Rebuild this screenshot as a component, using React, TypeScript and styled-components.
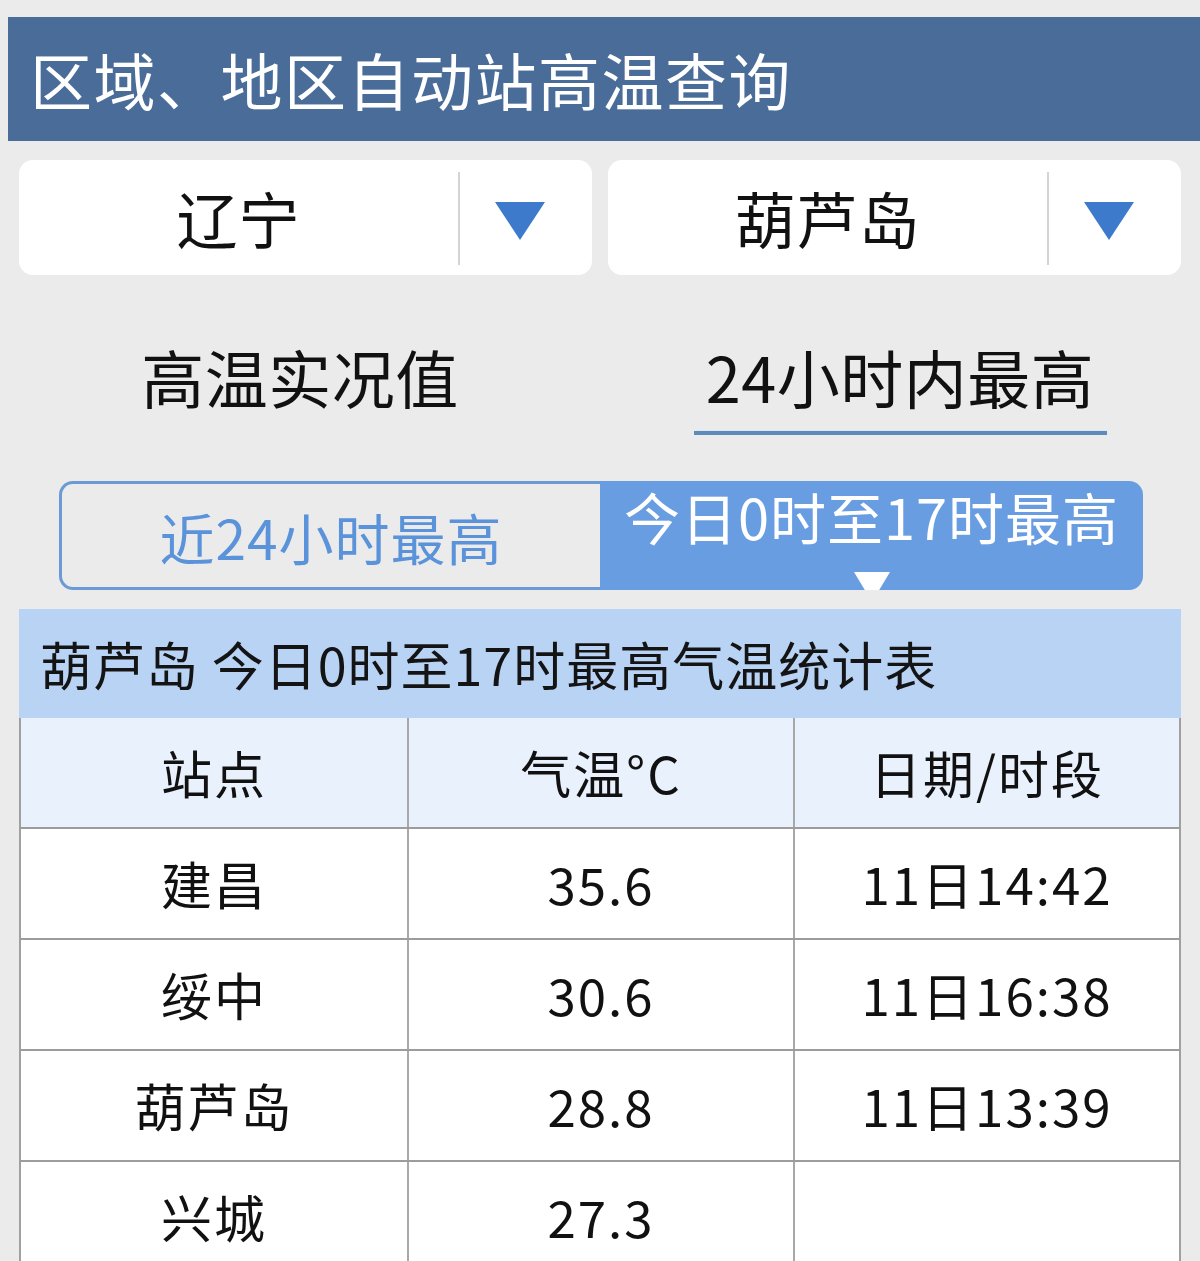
import styled, { createGlobalStyle } from 'styled-components';

const GlobalStyle = createGlobalStyle`
  html, body {
    margin: 0;
    padding: 0;
    background: #ebebeb;
  }
  body {
    font-family: "Noto Sans CJK SC", "Noto Sans", sans-serif;
    color: #111;
  }
`;

const Page = styled.div`
  width: 1200px;
  padding-top: 17px;
  box-sizing: border-box;
`;

const TitleBar = styled.div`
  margin-left: 8px;
  height: 124px;
  background: #4a6c98;
  display: flex;
  align-items: center;
  padding-left: 22px;
  color: #fff;
  font-size: 62px;
  line-height: 1;
  letter-spacing: 1.5px;
`;

const SelectRow = styled.div`
  display: grid;
  grid-template-columns: 1fr 1fr;
  gap: 16px;
  padding: 19px 19px 0;
`;

const SelectBox = styled.div`
  height: 115px;
  background: #fff;
  border-radius: 14px;
  display: flex;
  align-items: center;
`;

const SelectValue = styled.div`
  flex: 1;
  text-align: center;
  font-size: 61px;
  line-height: 1;
  letter-spacing: 1px;
`;

const SelectDivider = styled.div`
  width: 2px;
  align-self: stretch;
  margin: 12px 0 10px;
  background: #d4d4d4;
`;

const SelectArrow = styled.div`
  width: 132px;
  padding-right: 12px;
  padding-top: 6px;
  box-sizing: border-box;
  display: flex;
  justify-content: center;
`;

const Arrow = styled.div`
  width: 0;
  height: 0;
  border-left: 25px solid transparent;
  border-right: 25px solid transparent;
  border-top: 38px solid #3d7acb;
`;

const TabRow = styled.div`
  display: grid;
  grid-template-columns: 600px 600px;
  height: 206px;
`;

const Tab = styled.div`
  display: flex;
  flex-direction: column;
  align-items: center;
  padding-top: 68px;
  font-size: 63px;
  line-height: 66px;
  letter-spacing: 0.5px;
`;

const TabUnderline = styled.div`
  width: 413px;
  height: 4px;
  margin-top: 22px;
  background: #5e8cba;
  box-shadow: 0 -1px 0 #dbe8f5;
`;

const Segmented = styled.div`
  margin: 0 57px 0 59px;
  height: 109px;
  display: grid;
  grid-template-columns: 541px 1fr;
`;

const SegLeft = styled.div`
  border: 3px solid #6c9ad4;
  border-right: none;
  border-radius: 14px 0 0 14px;
  display: flex;
  align-items: center;
  justify-content: center;
  padding-top: 2px;
  color: #5b93da;
  font-size: 55px;
  line-height: 1;
  letter-spacing: 1px;
`;

const SegRight = styled.div`
  position: relative;
  background: #699de2;
  border-radius: 0 14px 14px 0;
  color: #fff;
  font-size: 56px;
  line-height: 70px;
  text-align: center;
  padding-top: 0;
  letter-spacing: 1px;
  box-sizing: border-box;
`;

const SegPointer = styled.div`
  position: absolute;
  left: 254px;
  bottom: 0;
  width: 36px;
  height: 18px;
  background: #fff;
  clip-path: polygon(0 0, 100% 0, 70% 100%, 30% 100%);
`;

const Table = styled.div`
  margin: 19px 19px 0;
`;

const TableTitle = styled.div`
  height: 109px;
  background: #b9d3f5;
  display: flex;
  align-items: center;
  padding-left: 21px;
  font-size: 52px;
  line-height: 1;
  letter-spacing: 1px;
  color: #141414;
`;

const Row = styled.div<{ $head?: boolean }>`
  display: grid;
  grid-template-columns: 1fr 1fr 1fr;
  height: 111px;
  background: ${p => (p.$head ? '#e9f1fc' : '#fff')};
  border-left: 2px solid #a0a0a0;
  border-right: 2px solid #a0a0a0;
  border-bottom: 2px solid #9c9c9c;
  box-sizing: border-box;
`;

const Cell = styled.div`
  display: flex;
  align-items: center;
  justify-content: center;
  font-size: 51px;
  line-height: 1;
  letter-spacing: 2px;
  color: #111;
  & + & {
    border-left: 2px solid #a8a8a8;
  }
`;

const rows = [
  ['建昌', '35.6', '11日14:42'],
  ['绥中', '30.6', '11日16:38'],
  ['葫芦岛', '28.8', '11日13:39'],
  ['兴城', '27.3', ''],
];

export default function App() {
  return (
    <Page>
      <GlobalStyle />
      <TitleBar>区域、地区自动站高温查询</TitleBar>

      <SelectRow>
        <SelectBox>
          <SelectValue>辽宁</SelectValue>
          <SelectDivider />
          <SelectArrow><Arrow /></SelectArrow>
        </SelectBox>
        <SelectBox>
          <SelectValue>葫芦岛</SelectValue>
          <SelectDivider />
          <SelectArrow><Arrow /></SelectArrow>
        </SelectBox>
      </SelectRow>

      <TabRow>
        <Tab>高温实况值</Tab>
        <Tab>
          24小时内最高
          <TabUnderline />
        </Tab>
      </TabRow>

      <Segmented>
        <SegLeft>近24小时最高</SegLeft>
        <SegRight>
          今日0时至17时最高
          <SegPointer />
        </SegRight>
      </Segmented>

      <Table>
        <TableTitle>葫芦岛 今日0时至17时最高气温统计表</TableTitle>
        <Row $head>
          <Cell>站点</Cell>
          <Cell>气温°C</Cell>
          <Cell>日期/时段</Cell>
        </Row>
        {rows.map(r => (
          <Row key={r[0]}>
            <Cell>{r[0]}</Cell>
            <Cell>{r[1]}</Cell>
            <Cell>{r[2]}</Cell>
          </Row>
        ))}
      </Table>
    </Page>
  );
}
